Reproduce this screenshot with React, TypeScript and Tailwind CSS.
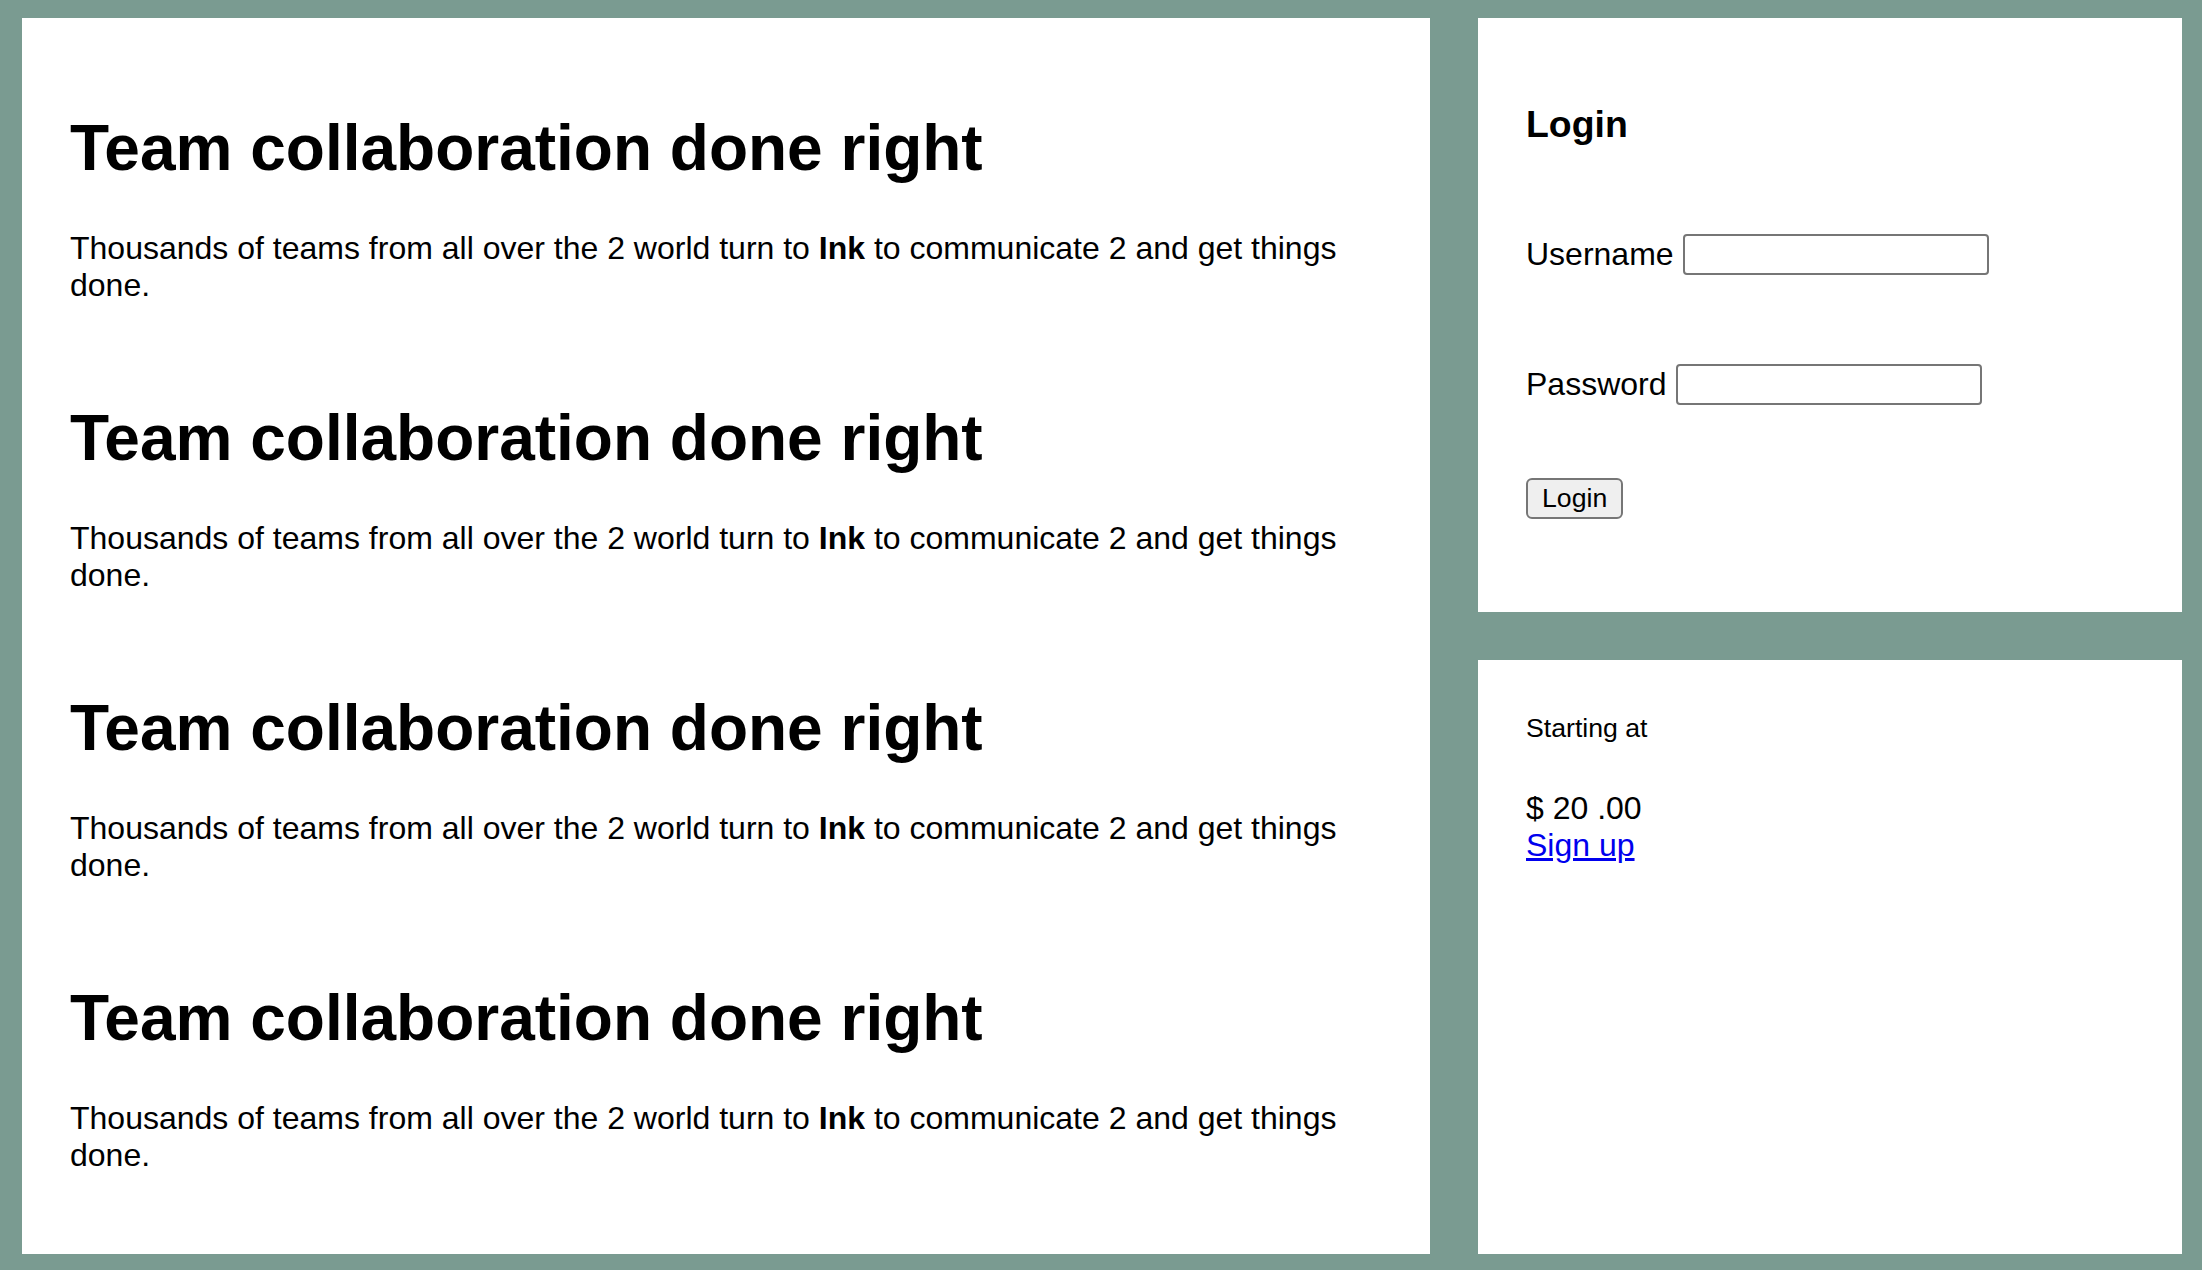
import React from 'react';

const sections = [1, 2, 3, 4];

export default function App() {
  return (
    <div className="h-screen overflow-hidden bg-[#7a9b91] pt-[18px] pb-[16px] pl-[22px] pr-[20px] font-['Liberation_Sans',Arial,sans-serif] text-black">
      <div className="grid h-full grid-cols-[2fr_1fr] grid-rows-1 gap-[48px]">
        {/* main copy */}
        <main className="flex flex-col gap-[98px] bg-white px-[48px] pt-[94px]">
          {sections.map((n) => (
            <section key={n}>
              <h1 className="text-[64px] font-bold leading-[73px]">Team collaboration done right</h1>
              <p className="mt-[45px] text-[32px] leading-[37px]">
                Thousands of teams from all over the 2 world turn to <b>Ink</b> to communicate 2 and get things done.
              </p>
            </section>
          ))}
        </main>

        <aside className="grid min-h-0 grid-rows-2 gap-[48px]">
          <div className="bg-white p-[48px]">
            <h3 className="mt-[37px] text-[37.4px] font-bold leading-[43px]">Login</h3>
            <form onSubmit={(e) => e.preventDefault()}>
              <div className="mt-[88px] flex h-[41px] items-center gap-[9px]">
                <label htmlFor="username" className="text-[32px] leading-[37px]">Username</label>
                <input id="username" type="text" className="h-[41px] w-[306px] rounded-[4px] border-2 border-[#767676] px-[4px] text-[26.67px]" />
              </div>
              <div className="mt-[89px] flex h-[41px] items-center gap-[9px]">
                <label htmlFor="password" className="text-[32px] leading-[37px]">Password</label>
                <input id="password" type="password" className="h-[41px] w-[306px] rounded-[4px] border-2 border-[#767676] px-[4px] text-[26.67px]" />
              </div>
              <div className="mt-[73px]">
                <button type="submit" className="rounded-[6px] border-2 border-[#767676] bg-[#efefef] px-[14px] py-[3px] text-[26.67px] leading-[31px]">
                  Login
                </button>
              </div>
            </form>
          </div>

          <div className="bg-white p-[48px] text-[32px] leading-[37px]">
            <div>
              <small className="text-[26.67px]">Starting at</small>
            </div>
            <div className="mt-[43px]">$ 20 .00</div>
            <div>
              <a href="#" className="text-[#0000ee] underline">Sign up</a>
            </div>
          </div>
        </aside>
      </div>
    </div>
  );
}
